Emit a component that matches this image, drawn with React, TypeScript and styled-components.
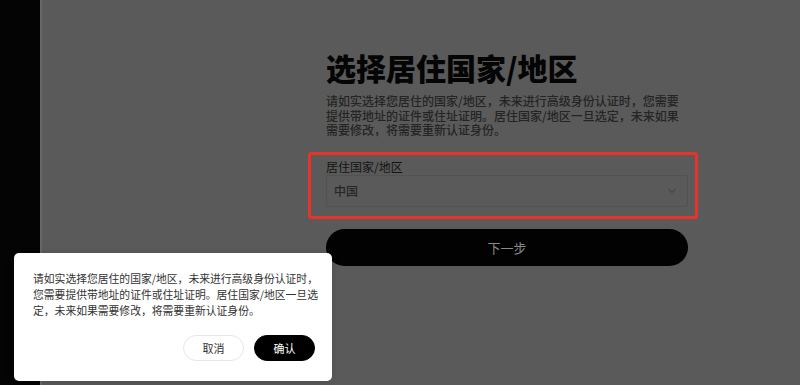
import styled, { createGlobalStyle } from "styled-components";
import { ChevronDown } from "lucide-react";

const GlobalStyle = createGlobalStyle`
	html, body {
		margin: 0;
		padding: 0;
		background: #5a5a5a;
	}
	body {
		font-family: "Noto Sans CJK SC", "Noto Sans", sans-serif;
	}
`;

const Page = styled.div`
	position: relative;
	display: flex;
	width: 800px;
	height: 385px;
	overflow: hidden;
`;

const Sidebar = styled.div`
	width: 40px;
	flex-shrink: 0;
	background: #040404;
`;

const Main = styled.main`
	flex: 1;
	background: #5a5a5a;
	border-left: 2px solid #686868;
	padding: 49px 0 0 284px;
	box-sizing: border-box;
`;

const Content = styled.div`
	width: 362px;
`;

const Title = styled.h1`
	margin: 0;
	font-size: 30px;
	line-height: 36px;
	font-weight: 900;
	color: #050505;
`;

const Intro = styled.p`
	margin: 9px 0 0;
	font-size: 12px;
	line-height: 14.5px;
	font-weight: 500;
	color: #242424;
`;

const Field = styled.div`
	position: relative;
	margin-top: 21px;

	&::after {
		content: "";
		position: absolute;
		left: -18px;
		right: -10px;
		top: -7px;
		bottom: -12px;
		border: 3px solid #e8332b;
		border-radius: 3px;
		pointer-events: none;
	}
`;

const Label = styled.div`
	font-size: 12px;
	line-height: 16px;
	color: #141414;
`;

const Select = styled.div`
	display: flex;
	align-items: center;
	justify-content: space-between;
	height: 32px;
	box-sizing: border-box;
	padding: 0 9px 0 7px;
	border: 1px solid #525252;
	border-radius: 2px;
`;

const SelectValue = styled.span`
	font-size: 12px;
	font-weight: 500;
	color: #262626;
`;

const NextButton = styled.button`
	display: block;
	width: 100%;
	height: 37px;
	margin-top: 22px;
	border: none;
	border-radius: 19px;
	background: #020202;
	color: #8a8a8a;
	font-family: inherit;
	font-size: 13px;
	cursor: pointer;
`;

const Dialog = styled.div`
	position: absolute;
	left: 14px;
	top: 253px;
	width: 318px;
	height: 128px;
	box-sizing: border-box;
	padding: 17px 13px 0 19px;
	background: #ffffff;
	border-radius: 5px;
	box-shadow: 0 2px 8px rgba(0, 0, 0, 0.15);
`;

const DialogText = styled.p`
	margin: 0;
	width: 286px;
	font-size: 10.8px;
	line-height: 16px;
	color: #333333;
`;

const Actions = styled.div`
	display: flex;
	justify-content: flex-end;
	gap: 10px;
	margin-top: 17px;
	padding-right: 4px;
`;

const ActionButton = styled.button<{ $primary?: boolean }>`
	width: 61px;
	height: 26px;
	border-radius: 13px;
	border: 1px solid ${(p) => (p.$primary ? "#000" : "#e6e6e6")};
	background: ${(p) => (p.$primary ? "#000" : "#fff")};
	color: ${(p) => (p.$primary ? "#fff" : "#333")};
	font-family: inherit;
	font-size: 11px;
	padding: 0;
	cursor: pointer;
`;

export default function App() {
	return (
		<>
			<GlobalStyle />
			<Page>
				<Sidebar />
				<Main>
					<Content>
						<Title>选择居住国家/地区</Title>
						<Intro>
							请如实选择您居住的国家/地区，未来进行高级身份认证时，您需要提供带地址的证件或住址证明。居住国家/地区一旦选定，未来如果需要修改，将需要重新认证身份。
						</Intro>
						<Field>
							<Label>居住国家/地区</Label>
							<Select>
								<SelectValue>中国</SelectValue>
								<ChevronDown size={12} color="#383838" strokeWidth={2} />
							</Select>
						</Field>
						<NextButton>下一步</NextButton>
					</Content>
				</Main>
				<Dialog>
					<DialogText>
						请如实选择您居住的国家/地区，未来进行高级身份认证时，您需要提供带地址的证件或住址证明。居住国家/地区一旦选定，未来如果需要修改，将需要重新认证身份。
					</DialogText>
					<Actions>
						<ActionButton>取消</ActionButton>
						<ActionButton $primary>确认</ActionButton>
					</Actions>
				</Dialog>
			</Page>
		</>
	);
}
